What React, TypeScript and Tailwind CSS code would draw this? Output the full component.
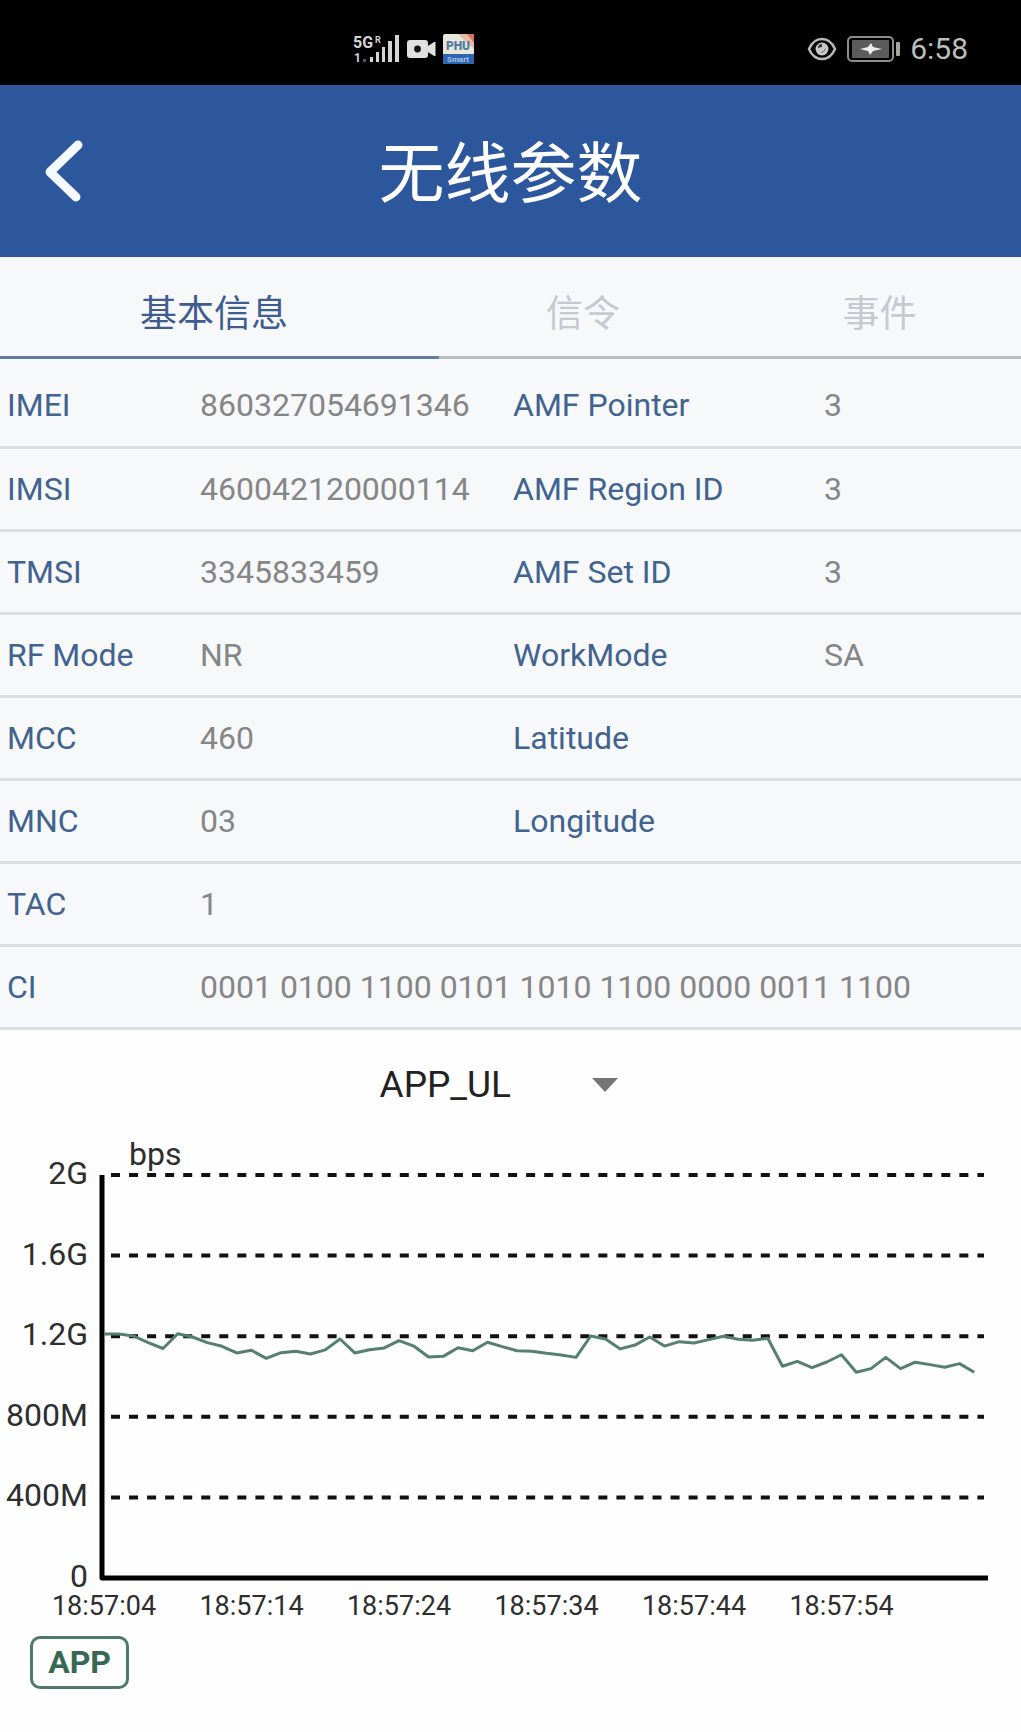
import { useState } from "react";

type Row = {
    label: string;
    value: string;
    label2?: string;
    value2?: string;
    wide?: boolean;
};

const tabs = ["基本信息", "信令", "事件"];

const rows: Row[] = [
    { label: "IMEI", value: "860327054691346", label2: "AMF Pointer", value2: "3" },
    { label: "IMSI", value: "460042120000114", label2: "AMF Region ID", value2: "3" },
    { label: "TMSI", value: "3345833459", label2: "AMF Set ID", value2: "3" },
    { label: "RF Mode", value: "NR", label2: "WorkMode", value2: "SA" },
    { label: "MCC", value: "460", label2: "Latitude", value2: "" },
    { label: "MNC", value: "03", label2: "Longitude", value2: "" },
    { label: "TAC", value: "1", wide: true },
    { label: "CI", value: "0001 0100 1100 0101 1010 1100 0000 0011 1100", wide: true },
];

// uplink throughput in Mbps, one sample per second
const samples = [
    1211, 1211, 1201, 1168, 1139, 1212, 1196, 1168, 1150, 1117,
    1130, 1090, 1118, 1125, 1112, 1132, 1186, 1117, 1133, 1142,
    1178, 1151, 1097, 1100, 1143, 1128, 1170, 1148, 1128, 1125,
    1115, 1107, 1095, 1201, 1186, 1137, 1156, 1196, 1151, 1173,
    1166, 1183, 1200, 1185, 1180, 1190, 1051, 1075, 1044, 1072,
    1108, 1021, 1039, 1095, 1039, 1071, 1059, 1046, 1064, 1021,
];

const yTicks = [
    { value: 2000, text: "2G" },
    { value: 1600, text: "1.6G" },
    { value: 1200, text: "1.2G" },
    { value: 800, text: "800M" },
    { value: 400, text: "400M" },
    { value: 0, text: "0" },
];

const xTicks = ["18:57:04", "18:57:14", "18:57:24", "18:57:34", "18:57:44", "18:57:54"];

const AXIS_X = 102;
const AXIS_Y = 448;
const toX = (second: number) => AXIS_X + 2 + second * 14.75;
const toY = (mbps: number) => AXIS_Y - (mbps * 403) / 2000;

function SignalIcon() {
    return (
        <svg width="48" height="32" viewBox="0 0 48 32" fill="#d4d4d4" className="font-['Roboto'] font-bold" aria-hidden>
            <text x="0" y="15" fontSize="16">
                5G
            </text>
            <text x="22" y="10" fontSize="9">
                R
            </text>
            <text x="1" y="29" fontSize="12">
                1
            </text>
            <rect x="10" y="26" width="3" height="3" opacity="0.4" />
            <rect x="17" y="24" width="3" height="5" />
            <rect x="23" y="19" width="3" height="10" />
            <rect x="29" y="14" width="3" height="15" />
            <rect x="35" y="8" width="4" height="21" />
            <rect x="42" y="2" width="4" height="27" />
        </svg>
    );
}

function CameraIcon() {
    return (
        <svg width="30" height="20" viewBox="0 0 30 20" aria-hidden>
            <rect x="0" y="1" width="21" height="18" rx="3" fill="#e0e0e0" />
            <path d="M20 8l8-5v14l-8-5z" fill="#e0e0e0" stroke="#e0e0e0" strokeLinejoin="round" />
            <circle cx="10.5" cy="10" r="3.4" fill="#111" />
        </svg>
    );
}

function PhuIcon() {
    return (
        <svg width="31" height="30" viewBox="0 0 31 30" className="font-['Roboto']" aria-hidden>
            <rect width="31" height="30" rx="2" fill="#e6e8da" />
            <path d="M15 0h14a2 2 0 0 1 2 2v13z" fill="#e8bba6" />
            <path d="M24 0h5a2 2 0 0 1 2 2v7z" fill="#d9745c" />
            <path d="M0 20h31v8a2 2 0 0 1-2 2H2a2 2 0 0 1-2-2z" fill="#2f63b4" />
            <text x="15" y="16" fontSize="12" fontWeight="900" textAnchor="middle" fill="#51799f">
                PHU
            </text>
            <text x="15" y="28" fontSize="8" fontWeight="700" textAnchor="middle" fill="#a9c3ea">
                Smart
            </text>
        </svg>
    );
}

function EyeIcon() {
    return (
        <svg width="30" height="24" viewBox="0 0 30 24" fill="none" aria-hidden>
            <path d="M2 12C5 5 9 2 15 2S25 5 28 12C25 19 21 22 15 22S5 19 2 12z" stroke="#b9b9b9" strokeWidth="2.5" />
            <circle cx="15" cy="12" r="6.5" fill="#c9c9c9" />
            <path d="M11 11a4 4 0 0 1 4-4v3z" fill="#333" />
            <path d="M14 15.5a5 5 0 0 0 4.5-4" stroke="#777" />
        </svg>
    );
}

function BatteryIcon() {
    return (
        <svg width="53" height="26" viewBox="0 0 53 26" fill="none" aria-hidden>
            <rect x="1" y="1" width="45" height="24" rx="4" stroke="#8d8d8d" strokeWidth="2" />
            <rect x="5" y="4" width="37" height="18" rx="1" fill="#5b5b5b" />
            <path d="M13 13l8-2 3-4 2 4 9 2-9 2-3 4-2-4z" fill="#ededed" />
            <rect x="49" y="6" width="4" height="14" rx="1" fill="#a5a5a5" />
        </svg>
    );
}

function StatusBar() {
    return (
        <div className="flex h-[85px] items-center justify-between bg-black pt-3 pr-[53px] pl-[353px]">
            <div className="flex items-center gap-[6px]">
                <SignalIcon />
                <CameraIcon />
                <PhuIcon />
            </div>
            <div className="flex items-center gap-[10px] text-[30px] leading-8 text-[#bdbdbd]">
                <EyeIcon />
                <BatteryIcon />
                <span>6:58</span>
            </div>
        </div>
    );
}

function Chart() {
    const points = samples.map((v, i) => `${toX(i)},${toY(v)}`).join(" ");

    return (
        <svg className="block h-auto w-full font-['Roboto']" viewBox="0 0 1021 498" fill="#2e2e2e" role="img" aria-label="APP_UL bps">
            <text x="129" y="35" fontSize="32">
                bps
            </text>

            {yTicks.map((tick) => (
                <g key={tick.text}>
                    <text x="88" y={toY(tick.value) + 9} fontSize="32" textAnchor="end">
                        {tick.text}
                    </text>
                    {tick.value > 0 && (
                        <line x1="111" x2="984" y1={toY(tick.value)} y2={toY(tick.value)} stroke="#111" strokeWidth="4" strokeDasharray="9 9.05" />
                    )}
                </g>
            ))}

            <path d={`M${AXIS_X} 45V${AXIS_Y}H988`} fill="none" stroke="#000" strokeWidth="5" strokeLinejoin="round" />
            <polyline points={points} fill="none" stroke="#55806f" strokeWidth="3" strokeLinejoin="round" />

            {xTicks.map((text, i) => (
                <text key={text} x={toX(i * 10)} y="485" fontSize="27" textAnchor="middle">
                    {text}
                </text>
            ))}
        </svg>
    );
}

export default function App() {
    const [active, setActive] = useState(0);
    const [metric, setMetric] = useState("APP_UL");

    return (
        <div className="min-h-screen bg-[#fdfefd] font-['Roboto','Noto_Sans_CJK_SC',sans-serif]">
            <StatusBar />

            {/* Title bar */}
            <header className="grid h-[172px] grid-cols-[1fr_auto_1fr] items-center bg-[#2c579d] px-11 text-white">
                <button type="button" aria-label="返回" className="w-10">
                    <svg width="40" height="64" viewBox="0 0 40 64" fill="none" aria-hidden>
                        <path d="M34 6L6 33l26 25" stroke="#f4faff" strokeWidth="9" strokeLinecap="round" strokeLinejoin="round" />
                    </svg>
                </button>
                <h1 className="pt-2 text-[66px] leading-[72px] font-normal">无线参数</h1>
            </header>

            {/* Tabs */}
            <nav className="bg-[#f7f8fa]">
                <div className="grid h-[99px] grid-cols-[428fr_310fr_283fr] pt-4">
                    {tabs.map((tab, i) => (
                        <button
                            key={tab}
                            type="button"
                            onClick={() => setActive(i)}
                            className={
                                active === i
                                    ? "text-[37px] text-[#3f5c91]"
                                    : "text-[37px] text-[#c6c9d0]"
                            }>
                            {tab}
                        </button>
                    ))}
                </div>
                <div className="h-[3px] bg-[#bcbdbf]">
                    <div className="h-full w-[43%] bg-[#667a99]" />
                </div>
            </nav>

            {/* Basic parameters */}
            <div className="bg-[#f7f8fa] pt-[5px]">
                <table className="w-full table-fixed text-left text-[32px] leading-10 text-[#858688]">
                    <colgroup>
                        <col className="w-[193px]" />
                        <col className="w-[313px]" />
                        <col className="w-[311px]" />
                        <col />
                    </colgroup>
                    <tbody>
                        {rows.map((row) => (
                            <tr key={row.label} className="h-[83px] border-b-3 border-[#dcdddf]">
                                <th scope="row" className="px-[7px] font-normal whitespace-nowrap text-[#41638f]">
                                    {row.label}
                                </th>
                                <td className="px-[7px] whitespace-nowrap" colSpan={row.wide ? 3 : 1}>
                                    {row.value}
                                </td>
                                {!row.wide && (
                                    <>
                                        <th scope="row" className="px-[7px] font-normal whitespace-nowrap text-[#41638f]">
                                            {row.label2}
                                        </th>
                                        <td className="px-[7px]">{row.value2}</td>
                                    </>
                                )}
                            </tr>
                        ))}
                    </tbody>
                </table>
            </div>

            {/* Metric picker */}
            <div className="flex justify-center pt-[33px] pb-[23px]">
                <div className="relative flex items-center">
                    <select
                        aria-label="指标"
                        value={metric}
                        onChange={(e) => setMetric(e.target.value)}
                        className="h-11 w-[262px] appearance-none bg-transparent text-[37px] leading-11 text-[#222]">
                        <option>APP_UL</option>
                        <option>APP_DL</option>
                    </select>
                    <svg className="pointer-events-none absolute right-6" width="26" height="14" viewBox="0 0 26 14" aria-hidden>
                        <path d="M0 0h26L13 14z" fill="#757575" />
                    </svg>
                </div>
            </div>

            <Chart />

            {/* Legend */}
            <div className="px-[30px] pt-2 pb-10">
                <button
                    type="button"
                    className="h-[53px] w-[99px] rounded-[10px] border-3 border-[#4d7a69] text-[32px] leading-10 font-bold text-[#376853]">
                    APP
                </button>
            </div>
        </div>
    );
}
